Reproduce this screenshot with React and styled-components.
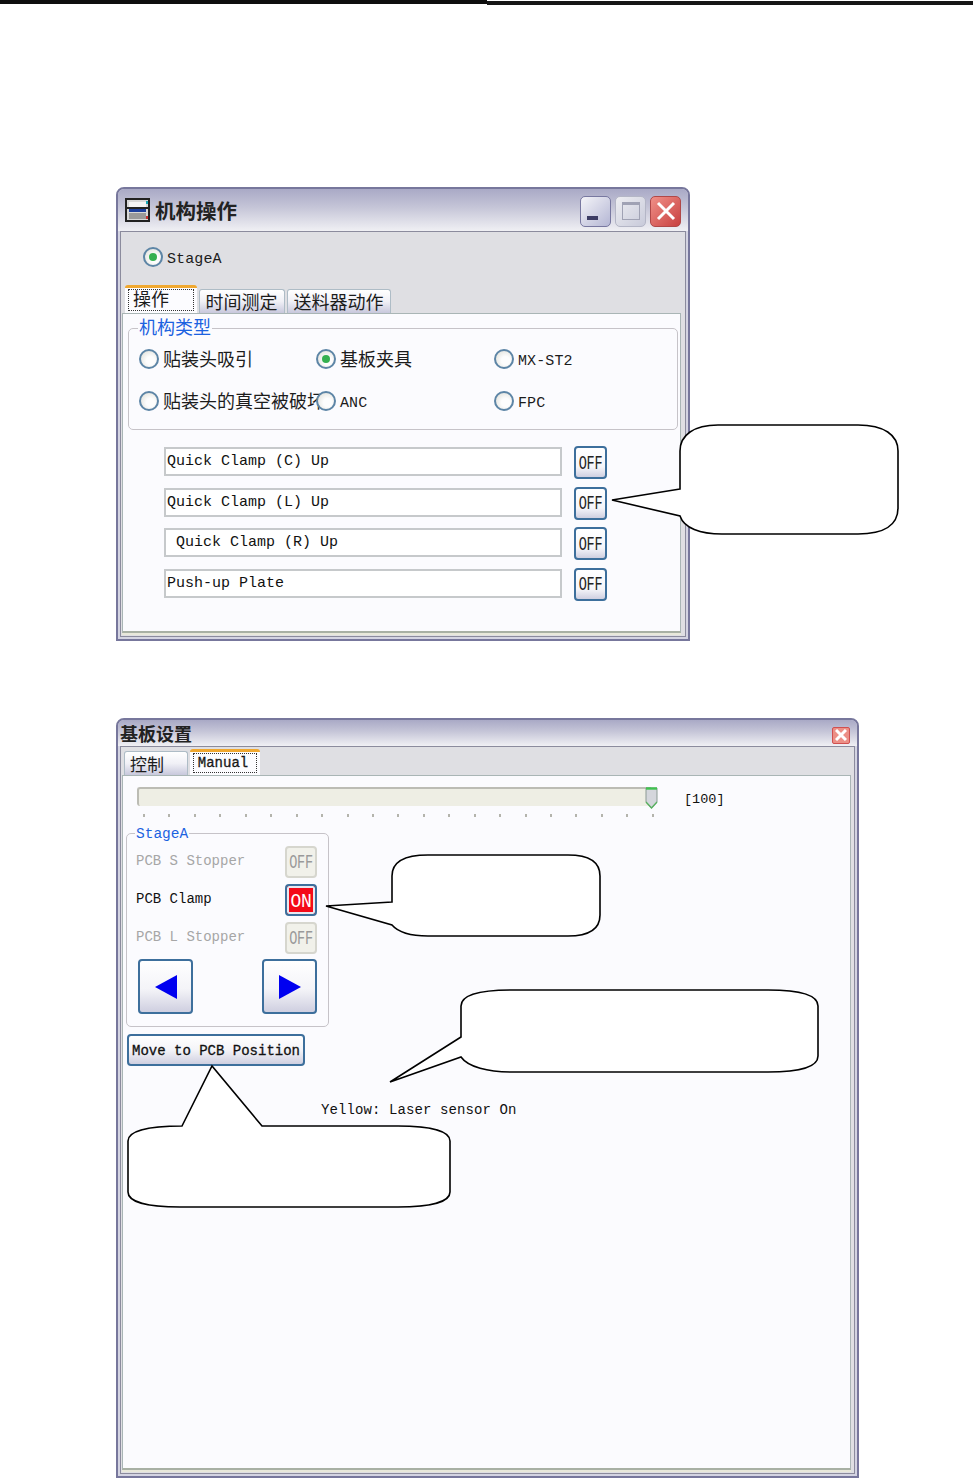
import styled, { createGlobalStyle } from 'styled-components';

const MONO = `'Liberation Mono', 'Noto Sans CJK SC', monospace`;
const CJK = `'Noto Sans CJK SC', 'Liberation Sans', sans-serif`;

const callouts = [
  {
    x: 608, y: 422, w: 294, h: 115,
    d: 'M680 489 L612 500 L680 516 C684 528 700 534 722 534 H858 C884 534 898 525 898 508 V451 C898 435 884 425 858 425 H718 C694 425 680 435 680 451 Z',
  },
  {
    x: 322, y: 852, w: 282, h: 87,
    d: 'M392 902 L326 906 L392 925 C398 932 410 936 428 936 H568 C590 936 600 929 600 915 V876 C600 862 590 855 568 855 H428 C406 855 392 861 392 876 Z',
  },
  {
    x: 386, y: 987, w: 436, h: 98,
    d: 'M461 1037 L390 1082 L461 1057 C468 1067 488 1072 512 1072 H768 C800 1072 818 1067 818 1056 V1006 C818 995 800 990 768 990 H512 C480 990 461 995 461 1006 Z',
  },
  {
    x: 124, y: 1062, w: 330, h: 149,
    d: 'M182 1126 L212 1066 L262 1126 H398 C430 1126 450 1131 450 1141 V1192 C450 1202 430 1207 398 1207 H180 C148 1207 128 1202 128 1192 V1141 C128 1131 148 1126 182 1126 Z',
  },
];

const inputs = ['Quick Clamp (C) Up', 'Quick Clamp (L) Up', 'Quick Clamp (R) Up', 'Push-up Plate'];
const stageRows = [
  { name: 'PCB S Stopper', off: true },
  { name: 'PCB Clamp', on: true },
  { name: 'PCB L Stopper', off: true },
];

function Radio({ checked, label, mono }) {
  return (
    <RadioLabel>
      <RadioCircle $checked={checked} />
      <RadioText $mono={mono}>{label}</RadioText>
    </RadioLabel>
  );
}

function Switch({ state = 'off', disabled }) {
  const on = state === 'on';
  return (
    <SwitchButton $on={on} $disabled={disabled}>
      <SwitchText $on={on}>{on ? 'ON' : 'OFF'}</SwitchText>
    </SwitchButton>
  );
}

export default function App() {
  return (
    <Page>
      <GlobalStyle />
      <TopRule>
        <RuleLeft />
        <RuleRight />
      </TopRule>

      <Window $width={574} $height={454} $top={183}>
        <TitleBar $height={42}>
          <AppIcon viewBox="0 0 25 24">
            <rect x="1" y="1" width="23" height="22" fill="#d8d8d8" stroke="#222" strokeWidth="2" />
            <rect x="4" y="4" width="17" height="6" fill="#f4f4f4" />
            <rect x="4" y="11" width="17" height="3" fill="#1c3f9c" />
            <rect x="4" y="15" width="17" height="6" fill="#9a9a9a" />
            <rect x="1" y="9" width="23" height="2" fill="#222" />
            <rect x="21" y="3" width="2" height="3" fill="#18a8b8" />
            <rect x="21" y="18" width="2" height="3" fill="#c83030" />
          </AppIcon>
          <TitleText>机构操作</TitleText>
          <CaptionButtons>
            <CaptionButton $kind="min"><MinGlyph /></CaptionButton>
            <CaptionButton $kind="max"><MaxGlyph /></CaptionButton>
            <CaptionButton $kind="close">
              <svg width="22" height="22" viewBox="0 0 22 22">
                <path d="M3 3 L19 19 M19 3 L3 19" stroke="#fff" strokeWidth="3" />
              </svg>
            </CaptionButton>
          </CaptionButtons>
        </TitleBar>
        <Body $right={4}>
          <StageRow>
            <Radio checked label="StageA" mono />
          </StageRow>
          <Tabs $top={18} $left={3} $height={28}>
            <Tab $active $w={72} $h={28}><FocusBox $left>操作</FocusBox></Tab>
            <Tab $w={86} $h={24}><TabLabel>时间测定</TabLabel></Tab>
            <Tab $w={104} $h={24}><TabLabel>送料器动作</TabLabel></Tab>
          </Tabs>
          <TabPage>
            <TypeGroup>
              <GroupLegend>机构类型</GroupLegend>
              <RadioGrid>
                <Radio label="贴装头吸引" />
                <Radio checked label="基板夹具" />
                <Radio label="MX-ST2" mono />
                <Radio label="贴装头的真空被破坏" />
                <Radio label="ANC" mono />
                <Radio label="FPC" mono />
              </RadioGrid>
            </TypeGroup>
            <InputList>
              {inputs.map((text, i) => (
                <InputRow key={text}>
                  <InputBox $indent={i === 2}>{text}</InputBox>
                  <Switch />
                </InputRow>
              ))}
            </InputList>
          </TabPage>
        </Body>
      </Window>

      <Window $width={743} $height={760} $top={78}>
        <TitleBar $height={26}>
          <SmallTitle>基板设置</SmallTitle>
          <SmallClose>
            <svg width="12" height="12" viewBox="0 0 12 12">
              <path d="M1 1 L11 11 M11 1 L1 11" stroke="#fff" strokeWidth="3" />
            </svg>
          </SmallClose>
        </TitleBar>
        <Body $right={3}>
          <Tabs $top={2} $left={2} $height={26}>
            <Tab $w={64} $h={24} $start><TabLabel $size={17}>控制</TabLabel></Tab>
            <Tab $active $w={70} $h={26} $small><FocusBox $shift>Manual</FocusBox></Tab>
          </Tabs>
          <TabPage>
            <SliderRow>
              <Track>
                <Thumb viewBox="0 0 13 22">
                  <path d="M1 1 H12 V15 L6.5 21 L1 15 Z" fill="#d4d6dc" stroke="#8c9a94" />
                  <path d="M1 1.5 H12" stroke="#3fc24f" strokeWidth="2.4" />
                  <path d="M1 15 L6.5 21 L12 15" fill="none" stroke="#58b060" strokeWidth="1.4" />
                </Thumb>
              </Track>
              <SliderValue>[100]</SliderValue>
            </SliderRow>
            <Ticks>
              {Array.from({ length: 21 }, (_, i) => <Tick key={i} />)}
            </Ticks>
            <StageGroup>
              <StageLegend>StageA</StageLegend>
              <StageList>
                {stageRows.map((row) => (
                  <StageItem key={row.name}>
                    <StageName $off={row.off}>{row.name}</StageName>
                    <Switch state={row.on ? 'on' : 'off'} disabled={row.off} />
                  </StageItem>
                ))}
              </StageList>
              <ArrowRow>
                <ArrowButton>
                  <svg width="22" height="24" viewBox="0 0 22 24"><path d="M0 12 L22 0 V24 Z" fill="#0000f0" /></svg>
                </ArrowButton>
                <ArrowButton>
                  <svg width="22" height="24" viewBox="0 0 22 24"><path d="M22 12 L0 0 V24 Z" fill="#0000f0" /></svg>
                </ArrowButton>
              </ArrowRow>
            </StageGroup>
            <MoveButton>Move to PCB Position</MoveButton>
            <StatusText>Yellow: Laser sensor On</StatusText>
          </TabPage>
        </Body>
      </Window>

      {callouts.map((c) => (
        <Callout key={c.d} $x={c.x} $y={c.y} width={c.w} height={c.h} viewBox={`${c.x} ${c.y} ${c.w} ${c.h}`}>
          <path d={c.d} fill="#fff" stroke="#000" strokeWidth="1.6" strokeLinejoin="miter" />
        </Callout>
      ))}
    </Page>
  );
}

const GlobalStyle = createGlobalStyle`
  html, body { margin: 0; padding: 0; background: #fff; }
  * { box-sizing: border-box; }
`;

const Page = styled.div`
  position: relative;
  width: 973px;
  height: 1479px;
  overflow: hidden;
  background: #fff;
  font-family: ${MONO};
  color: #111;
`;

const TopRule = styled.div`
  display: flex;
  height: 5px;
`;

const RuleLeft = styled.div`
  width: 487px;
  height: 4px;
  background: #0e0e0e;
`;

const RuleRight = styled.div`
  flex: 1;
  height: 4px;
  margin-top: 1px;
  background: #161616;
`;

const Window = styled.div`
  display: flex;
  flex-direction: column;
  width: ${(p) => p.$width}px;
  height: ${(p) => p.$height}px;
  margin: ${(p) => p.$top - 1}px 0 0 116px;
  padding: 0 2px 2px;
  background: #d4d4e2;
  border: 2px solid #77779c;
  border-radius: 8px 8px 0 0;
`;

const TitleBar = styled.div`
  display: flex;
  align-items: center;
  flex: none;
  height: ${(p) => p.$height}px;
  margin: 0 -2px;
  padding: 0 7px;
  border-radius: 6px 6px 0 0;
  background: linear-gradient(#a9a9c6, #c6c6d8 45%, #f0f0f4);
`;

const AppIcon = styled.svg`
  width: 25px;
  height: 24px;
  flex: none;
`;

const TitleText = styled.div`
  margin-left: 5px;
  font: 700 20.5px/24px ${CJK};
  color: #222;
`;

const SmallTitle = styled.div`
  margin-left: -5px;
  font: 700 18px/24px ${CJK};
  color: #222;
`;

const SmallClose = styled.div`
  display: flex;
  align-items: center;
  justify-content: center;
  width: 18px;
  height: 17px;
  margin: 4px 0 0 auto;
  border-radius: 2px;
  border: 1px solid #d05050;
  background: #ec8f86;
`;

const CaptionButtons = styled.div`
  display: flex;
  gap: 4px;
  margin: 2px 0 0 auto;
`;

const captionColours = {
  min: 'linear-gradient(135deg, #f4f4f8, #b4b6d4); border: 1px solid #7878a0',
  max: 'linear-gradient(135deg, #eeeef2, #c8cada); border: 1px solid #b4b6c6',
  close: 'linear-gradient(135deg, #f09088, #c84040); border: 1px solid #b04848',
};

const CaptionButton = styled.div`
  display: flex;
  align-items: center;
  justify-content: center;
  width: 31px;
  height: 31px;
  border-radius: 5px;
  background: ${(p) => captionColours[p.$kind]};
`;

const MinGlyph = styled.div`
  width: 11px;
  height: 4px;
  margin-top: 13px;
  margin-right: 6px;
  background: #3c3c64;
`;

const MaxGlyph = styled.div`
  width: 18px;
  height: 18px;
  border: 1px solid #a0a2b4;
  border-top-width: 3px;
`;

const Body = styled.div`
  display: flex;
  flex-direction: column;
  flex: 1;
  min-height: 0;
  padding: 0 ${(p) => p.$right}px 3px 1px;
  background: #dfdfe3;
  border: 1px solid #8b8b9d;
`;

const StageRow = styled.div`
  display: flex;
  height: 20px;
  margin: 15px 0 0 21px;
`;

const Tabs = styled.div`
  display: flex;
  align-items: flex-end;
  gap: 2px;
  flex: none;
  height: ${(p) => p.$height}px;
  margin-top: ${(p) => p.$top}px;
  padding-left: ${(p) => p.$left}px;
`;

const Tab = styled.div`
  display: flex;
  align-items: center;
  justify-content: ${(p) => (p.$start ? 'flex-start' : 'center')};
  width: ${(p) => p.$w}px;
  height: ${(p) => p.$h}px;
  padding-left: ${(p) => (p.$start ? 6 : 0)}px;
  border: 1px solid #aebcc6;
  border-bottom: none;
  border-radius: 3px 3px 0 0;
  font: 400 18px/22px ${CJK};
  color: #1c1c1c;
  background: linear-gradient(#fff, #f0f0f6 50%, #c8c8dc);
  ${(p) => p.$active && `
    background: #fcfcff;
    border: none;
    border-top: 3px solid #f0a830;
    padding: 1px 3px 2px;
    align-items: stretch;
  `}
  ${(p) => p.$small && `
    font: 400 14px/18px ${MONO};
    -webkit-text-stroke: 0.3px #111;
  `}
`;

const TabLabel = styled.span`
  margin-bottom: ${(p) => (p.$size ? 0 : 2)}px;
  margin-left: -1px;
  font-size: ${(p) => p.$size || 18}px;
`;

const FocusBox = styled.div`
  display: flex;
  align-items: center;
  justify-content: ${(p) => (p.$left ? 'flex-start' : 'center')};
  width: 100%;
  padding: 0 ${(p) => (p.$shift ? 4 : 0)}px ${(p) => (p.$left ? 5 : 0)}px ${(p) => (p.$left ? 4 : 0)}px;
  border: 1px dotted #333;
`;

const TabPage = styled.div`
  flex: 1;
  min-height: 0;
  padding: 2px 3px 0 5px;
  background: #fbfbfe;
  border: 1px solid #a9b5b5;
  border-bottom: 2px solid #a8b0a4;
  box-shadow: 0 2px 0 #e8e8da;
`;

const groupBorder = `
  margin: 0;
  border: 1.5px solid #c6c3c8;
  border-radius: 5px;
`;

const TypeGroup = styled.fieldset`
  ${groupBorder}
  width: 550px;
  height: 114px;
  padding: 9px 0 0 10px;
`;

const GroupLegend = styled.legend`
  margin-left: -1px;
  padding: 0 1px 4px;
  font: 400 18px/20px ${CJK};
  color: #1b62e0;
`;

const RadioGrid = styled.div`
  display: grid;
  grid-template-columns: 177px 178px 1fr;
  grid-auto-rows: 20px;
  row-gap: 22px;
`;

const RadioLabel = styled.label`
  display: flex;
  align-items: center;
  gap: 4px;
  min-width: 0;
`;

const RadioCircle = styled.span`
  position: relative;
  flex: none;
  width: 20px;
  height: 20px;
  border-radius: 50%;
  border: 2px solid #5d85a6;
  background: radial-gradient(circle at 60% 60%, #fdfdfd 30%, #dcdcd4);
  ${(p) => p.$checked && `
    &::after {
      content: '';
      position: absolute;
      left: 4px;
      top: 4px;
      width: 8px;
      height: 8px;
      border-radius: 50%;
      background: #35b050;
    }
  `}
`;

const RadioText = styled.span`
  margin-top: -2px;
  white-space: nowrap;
  font: 400 18px/20px ${CJK};
  color: #1c1c1c;
  ${(p) => p.$mono && `
    margin-top: 5px;
    font: 400 15px/20px ${MONO};
    letter-spacing: 0.1px;
  `}
`;

const InputList = styled.div`
  display: flex;
  flex-direction: column;
  gap: 7.67px;
  margin: 16px 0 0 36px;
`;

const InputRow = styled.div`
  display: flex;
  align-items: flex-start;
  gap: 12px;
`;

const InputBox = styled.div`
  width: 398px;
  height: 29px;
  margin-top: 1px;
  padding-left: ${(p) => (p.$indent ? 10 : 1)}px;
  border: 2px solid #c6c9cb;
  font: 400 15px/26px ${MONO};
  white-space: pre;
  background: #fff;
`;

const SwitchButton = styled.div`
  display: flex;
  align-items: center;
  justify-content: center;
  flex: none;
  width: 33px;
  height: 33px;
  border: 2px solid #3d6f9c;
  border-radius: 4px;
  color: #222;
  background: linear-gradient(#fff, #f6f6fa 65%, #cfcfe0);
  ${(p) => p.$disabled && `
    width: 32px;
    height: 32px;
    border-color: #d6d6ce;
    color: #999;
    background: #f1f1ea;
  `}
  ${(p) => p.$on && `
    width: 32px;
    height: 32px;
    color: #fff;
    background: #f40a18;
    box-shadow: inset 0 0 0 2px #e8e8f0;
  `}
`;

const SwitchText = styled.span`
  display: block;
  margin-top: 2px;
  font: 400 ${(p) => (p.$on ? 18 : 13.5)}px/16px ${MONO};
  letter-spacing: -0.3px;
  transform: scaleY(${(p) => (p.$on ? 1.15 : 1.5)});
`;

const SliderRow = styled.div`
  display: flex;
  align-items: flex-start;
  margin: 9px 0 0 9px;
`;

const Track = styled.div`
  position: relative;
  width: 514px;
  height: 19px;
  background: #eeeee4;
  border: solid #bcbcb4;
  border-width: 2px 0 0 2px;
  border-radius: 3px 0 0 3px;
`;

const Thumb = styled.svg`
  position: absolute;
  right: -7px;
  top: -2px;
  width: 13px;
  height: 22px;
`;

const SliderValue = styled.div`
  margin: 3px 0 0 33px;
  font: 400 13.5px/20px ${MONO};
`;

const Ticks = styled.div`
  display: flex;
  justify-content: space-between;
  width: 511px;
  margin: 4px 0 0 15px;
`;

const Tick = styled.span`
  width: 2px;
  height: 3px;
  background: #b4b4ac;
`;

const StageGroup = styled.fieldset`
  ${groupBorder}
  width: 203px;
  height: 203px;
  margin: 7px 0 0 -2px;
  padding: 4px 11px 0 9px;
`;

const StageLegend = styled.legend`
  margin-left: -1px;
  padding: 2px 1px 0;
  font: 400 14.5px/16px ${MONO};
  color: #1b62e0;
`;

const StageList = styled.div`
  display: flex;
  flex-direction: column;
  gap: 6px;
`;

const StageItem = styled.div`
  display: flex;
  align-items: center;
  justify-content: space-between;
`;

const StageName = styled.span`
  margin-top: -2px;
  font: 400 14px/20px ${MONO};
  color: ${(p) => (p.$off ? '#a6a6a6' : '#111')};
`;

const ArrowRow = styled.div`
  display: flex;
  justify-content: space-between;
  margin: 5px 0 0 2px;
`;

const ArrowButton = styled.div`
  display: flex;
  align-items: center;
  justify-content: center;
  width: 55px;
  height: 55px;
  border: 2px solid #3d6f9c;
  border-radius: 4px;
  background: linear-gradient(#fff, #f4f4f8 55%, #cfcfe0);
`;

const MoveButton = styled.div`
  width: 178px;
  height: 32px;
  margin: 7px 0 0 -1px;
  border: 2px solid #3d6f9c;
  border-radius: 4px;
  font: 400 14px/30px ${MONO};
  text-align: center;
  -webkit-text-stroke: 0.3px #111;
  background: linear-gradient(#fff, #f4f4f8 50%, #cfcfe0);
`;

const StatusText = styled.div`
  margin: 34px 0 0 193px;
  font: 400 14px/20px ${MONO};
  letter-spacing: 0.1px;
  white-space: pre;
`;

const Callout = styled.svg`
  position: absolute;
  left: ${(p) => p.$x}px;
  top: ${(p) => p.$y}px;
`;
